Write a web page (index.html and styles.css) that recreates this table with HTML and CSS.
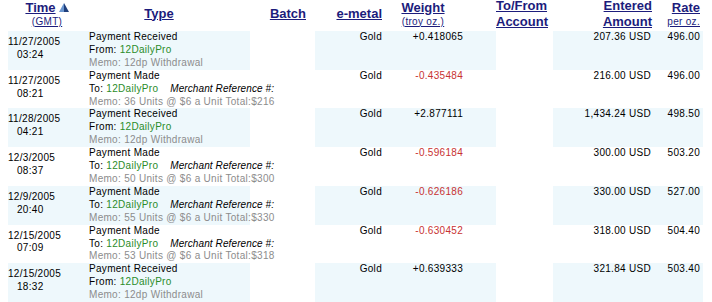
FILE: index.html
```html
<!DOCTYPE html>
<html>
<head>
<meta charset="utf-8">
<title>Account History</title>
<link rel="stylesheet" href="styles.css">
</head>
<body>
<table class="ledger">
  <colgroup>
    <col class="w-time"><col class="w-type"><col class="w-batch"><col class="w-metal">
    <col class="w-weight"><col class="w-acct"><col class="w-amount"><col class="w-rate">
  </colgroup>
  <thead>
    <tr>
      <th class="h-time"><span class="lnk">Time</span><svg class="sort" width="10" height="9" viewBox="0 0 10 9"><polygon points="5,0 0,9 5,9" fill="#6a96cf"/><polygon points="5,0 10,9 5,9" fill="#1f3f7c"/></svg><span class="sub lnk">(GMT)</span></th>
      <th class="h-type"><span class="lnk">Type</span></th>
      <th class="h-batch"><span class="lnk">Batch</span></th>
      <th class="h-metal"><span class="lnk">e-metal</span></th>
      <th class="h-weight"><span class="lnk">Weight</span><span class="sub lnk">(troy oz.)</span></th>
      <th class="h-acct"><span class="lnk">To/From</span><br><span class="lnk">Account</span></th>
      <th class="h-amount"><span class="lnk">Entered</span><br><span class="lnk">Amount</span></th>
      <th class="h-rate"><span class="lnk">Rate</span><span class="sub lnk">per oz.</span></th>
    </tr>
  </thead>
  <tbody>
    <tr class="alt">
      <td class="c-time">11/27/2005<span class="hr">03:24</span></td>
      <td class="c-type">Payment Received<br>From: <span class="who">12DailyPro</span><br><span class="memo">Memo: 12dp Withdrawal</span></td>
      <td class="blank"></td>
      <td class="c-metal">Gold</td>
      <td class="c-weight">+0.418065</td>
      <td class="blank"></td>
      <td class="c-amount">207.36 USD</td>
      <td class="c-rate">496.00</td>
    </tr>
    <tr>
      <td class="c-time">11/27/2005<span class="hr">08:21</span></td>
      <td class="c-type">Payment Made<br>To: <span class="who">12DailyPro</span><i class="ref">Merchant Reference #:</i><br><span class="memo">Memo: 36 Units @ $6 a Unit Total:$216</span></td>
      <td class="blank"></td>
      <td class="c-metal">Gold</td>
      <td class="c-weight neg">-0.435484</td>
      <td class="blank"></td>
      <td class="c-amount">216.00 USD</td>
      <td class="c-rate">496.00</td>
    </tr>
    <tr class="alt">
      <td class="c-time">11/28/2005<span class="hr">04:21</span></td>
      <td class="c-type">Payment Received<br>From: <span class="who">12DailyPro</span><br><span class="memo">Memo: 12dp Withdrawal</span></td>
      <td class="blank"></td>
      <td class="c-metal">Gold</td>
      <td class="c-weight">+2.877111</td>
      <td class="blank"></td>
      <td class="c-amount">1,434.24 USD</td>
      <td class="c-rate">498.50</td>
    </tr>
    <tr>
      <td class="c-time">12/3/2005<span class="hr">08:37</span></td>
      <td class="c-type">Payment Made<br>To: <span class="who">12DailyPro</span><i class="ref">Merchant Reference #:</i><br><span class="memo">Memo: 50 Units @ $6 a Unit Total:$300</span></td>
      <td class="blank"></td>
      <td class="c-metal">Gold</td>
      <td class="c-weight neg">-0.596184</td>
      <td class="blank"></td>
      <td class="c-amount">300.00 USD</td>
      <td class="c-rate">503.20</td>
    </tr>
    <tr class="alt">
      <td class="c-time">12/9/2005<span class="hr">20:40</span></td>
      <td class="c-type">Payment Made<br>To: <span class="who">12DailyPro</span><i class="ref">Merchant Reference #:</i><br><span class="memo">Memo: 55 Units @ $6 a Unit Total:$330</span></td>
      <td class="blank"></td>
      <td class="c-metal">Gold</td>
      <td class="c-weight neg">-0.626186</td>
      <td class="blank"></td>
      <td class="c-amount">330.00 USD</td>
      <td class="c-rate">527.00</td>
    </tr>
    <tr>
      <td class="c-time">12/15/2005<span class="hr">07:09</span></td>
      <td class="c-type">Payment Made<br>To: <span class="who">12DailyPro</span><i class="ref">Merchant Reference #:</i><br><span class="memo">Memo: 53 Units @ $6 a Unit Total:$318</span></td>
      <td class="blank"></td>
      <td class="c-metal">Gold</td>
      <td class="c-weight neg">-0.630452</td>
      <td class="blank"></td>
      <td class="c-amount">318.00 USD</td>
      <td class="c-rate">504.40</td>
    </tr>
    <tr class="alt">
      <td class="c-time">12/15/2005<span class="hr">18:32</span></td>
      <td class="c-type">Payment Received<br>From: <span class="who">12DailyPro</span><br><span class="memo">Memo: 12dp Withdrawal</span></td>
      <td class="blank"></td>
      <td class="c-metal">Gold</td>
      <td class="c-weight">+0.639333</td>
      <td class="blank"></td>
      <td class="c-amount">321.84 USD</td>
      <td class="c-rate">503.40</td>
    </tr>
  </tbody>
</table>
</body>
</html>
```
FILE: styles.css
```css
html, body {
  margin: 0;
  padding: 0;
  background: #ffffff;
}

body {
  font-family: "Liberation Sans", Arial, sans-serif;
  color: #000;
}

.ledger {
  margin: -4px 0 0 8px;
  border-collapse: collapse;
  border-spacing: 0;
  table-layout: fixed;
  width: 695px;
}

.w-time { width: 78px; }
.w-type { width: 164px; }
.w-batch { width: 65px; }
.w-metal { width: 69px; }
.w-weight { width: 112px; }
.w-acct { width: 57px; }
.w-amount { width: 100px; }
.w-rate { width: 50px; }

.ledger th {
  padding: 0;
  height: 35px;
  vertical-align: middle;
  font-size: 13px;
  line-height: 16px;
  font-weight: bold;
  color: #1c1c7c;
  white-space: nowrap;
  text-align: center;
}

.lnk {
  text-decoration: underline;
}

.sub {
  display: block;
  font-size: 10px;
  line-height: 12px;
  font-weight: normal;
  letter-spacing: 0.3px;
}

.sort {
  display: inline-block;
  margin-left: 3px;
  vertical-align: 0;
}

.h-type { padding-right: 18px !important; }
.h-batch { text-align: right !important; padding-right: 9px !important; }
.h-metal { text-align: right !important; padding-right: 2px !important; }
.h-weight { padding-right: 34px !important; }
.h-acct { text-align: left !important; }
.h-amount { text-align: right !important; padding-right: 1px !important; }
.h-rate { text-align: right !important; padding-right: 3px !important; }

.ledger td {
  padding: 0;
  font-size: 10px;
  line-height: 12.9px;
  letter-spacing: 0.3px;
  vertical-align: top;
  white-space: nowrap;
}

.alt td {
  background: #eef8fc;
}

.alt td.blank {
  background: #ffffff;
}

.c-time {
  vertical-align: middle !important;
  padding-bottom: 3px !important;
}

.hr {
  display: block;
  padding-left: 9px;
}

.c-type {
  padding-left: 3px !important;
}

.who {
  color: #2a8c2a;
}

.ref {
  margin-left: 12px;
  letter-spacing: 0.1px;
}

.memo {
  color: #8c8c8c;
}

.c-metal {
  text-align: right;
  padding-right: 2px !important;
}

.c-weight {
  text-align: right;
  padding-right: 33px !important;
}

.neg {
  color: #c83232;
}

.c-amount {
  text-align: right;
  padding-right: 2px !important;
}

.c-rate {
  text-align: right;
  padding-right: 3px !important;
}
```
